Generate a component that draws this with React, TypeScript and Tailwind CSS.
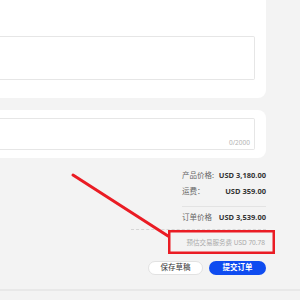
import React from 'react'

const rows = [
  { label: '产品价格:', value: 'USD 3,180.00' },
  { label: '运费：', value: 'USD 359.00' },
]

function App(): JSX.Element {
  return (
    <div className="relative w-[300px] h-[300px] overflow-hidden bg-[#f3f3f3] font-['Noto_Sans','Noto_Sans_CJK_SC',sans-serif]">
      <div className="w-[266px]">
        {/* 备注卡片 */}
        <div className="h-[98px] bg-white rounded-br-[8px] pt-[36px] pr-[11px]">
          <div className="h-[44px] border border-l-0 border-[#e6e6e6] rounded-r-[2px] bg-white" />
        </div>

        {/* 留言卡片 */}
        <div className="mt-[12px] bg-white rounded-r-[8px] py-[8px] pr-[11px]">
          <div className="h-[32px] border border-l-0 border-[#e6e6e6] rounded-r-[2px] flex items-end justify-end pr-[4px] pb-[2px]">
            <span className="text-[6.5px] leading-[9px] text-[#b3b3b3]">0/2000</span>
          </div>
        </div>

        {/* 价格汇总 */}
        <div className="mt-[10px] flex flex-col items-end">
          <div className="w-[84px]">
            {rows.map((r) => (
              <div key={r.label} className="h-[16px] flex items-center justify-between">
                <span className="text-[7.5px] text-[#666]">{r.label}</span>
                <span className="text-[7.5px] font-bold text-[#333]">{r.value}</span>
              </div>
            ))}
            <div className="mt-[6px] h-[1px] bg-[#e3e3e3]" />
            <div className="mt-[3px] h-[16px] flex items-center justify-between">
              <span className="text-[7.5px] text-[#666]">订单价格</span>
              <span className="text-[7.5px] font-bold text-[#333]">USD 3,539.00</span>
            </div>
          </div>
          <div className="mt-[3px] w-[135px] border-t border-dashed border-[#d6d6d6]" />
          <div className="mt-[6px] h-[14px] flex items-center pr-[1px]">
            <span className="text-[6.5px] text-[#aaa]">预估交易服务费 USD 70.78</span>
          </div>
          <div className="mt-[11px] flex gap-[6px]">
            <button className="w-[55px] h-[14px] rounded-full bg-white border border-[#e2e2e2] text-[7.5px] leading-none text-[#333]">
              保存草稿
            </button>
            <button className="w-[57px] h-[14px] rounded-full bg-[#0f4cf0] text-[7.5px] leading-none font-bold text-white">
              提交订单
            </button>
          </div>
        </div>
      </div>

      <div className="absolute left-0 right-0 top-[289px] h-[2px] bg-[#e8e8e8]" />

      {/* 标注 */}
      <svg className="absolute inset-0 pointer-events-none" width="300" height="300" viewBox="0 0 300 300">
        <line x1="73" y1="175" x2="168" y2="236" stroke="#ea1c24" strokeWidth="3" strokeLinecap="round" />
        <rect x="169.25" y="231.25" width="104.5" height="21.5" fill="none" stroke="#ea1c24" strokeWidth="2.5" />
      </svg>
    </div>
  )
}

export default App
